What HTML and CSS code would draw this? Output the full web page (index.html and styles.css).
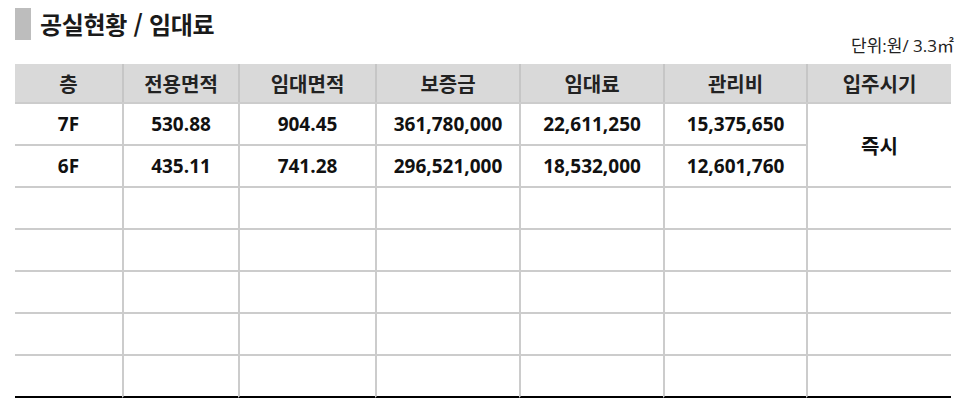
FILE: index.html
```html
<!DOCTYPE html>
<html lang="ko">
<head>
<meta charset="utf-8">
<title>공실현황 / 임대료</title>
<link rel="stylesheet" href="styles.css">
</head>
<body>
<div class="page">
  <div class="title-row">
    <span class="title-mark"></span>
    <h1 class="title">공실현황 / 임대료</h1>
  </div>
  <div class="unit">단위:원/ 3.3㎡</div>
  <table class="vacancy">
    <colgroup>
      <col class="c1"><col class="c2"><col class="c3"><col class="c4"><col class="c5"><col class="c6"><col class="c7">
    </colgroup>
    <thead>
      <tr>
        <th>층</th><th>전용면적</th><th>임대면적</th><th>보증금</th><th>임대료</th><th>관리비</th><th>입주시기</th>
      </tr>
    </thead>
    <tbody>
      <tr>
        <td>7F</td><td>530.88</td><td>904.45</td><td>361,780,000</td><td>22,611,250</td><td>15,375,650</td><td rowspan="2" class="move">즉시</td>
      </tr>
      <tr>
        <td>6F</td><td>435.11</td><td>741.28</td><td>296,521,000</td><td>18,532,000</td><td>12,601,760</td>
      </tr>
      <tr><td></td><td></td><td></td><td></td><td></td><td></td><td></td></tr>
      <tr><td></td><td></td><td></td><td></td><td></td><td></td><td></td></tr>
      <tr><td></td><td></td><td></td><td></td><td></td><td></td><td></td></tr>
      <tr><td></td><td></td><td></td><td></td><td></td><td></td><td></td></tr>
      <tr class="last"><td></td><td></td><td></td><td></td><td></td><td></td><td></td></tr>
    </tbody>
  </table>
</div>
</body>
</html>
```

FILE: styles.css
```css
html, body {
  margin: 0;
  padding: 0;
  background: #ffffff;
}

body {
  font-family: "Open Sans", "Noto Sans CJK KR", sans-serif;
  color: #111111;
}

.page {
  padding: 8px 15px 0 15px;
  width: 936px;
}

.title-row {
  display: flex;
  align-items: center;
  gap: 9px;
  height: 32px;
}

.title-mark {
  display: block;
  width: 16px;
  height: 32px;
  background: #bdbdbd;
}

.title {
  margin: 0;
  font-family: "Noto Sans CJK KR", sans-serif;
  font-size: 24px;
  font-weight: 700;
  line-height: 32px;
  color: #1a1a1a;
  letter-spacing: -0.3px;
}

.unit {
  margin-top: -4px;
  margin-right: -3px;
  text-align: right;
  font-size: 17px;
  line-height: 20px;
  color: #222222;
}

.vacancy {
  margin-top: 8px;
  width: 936px;
  table-layout: fixed;
  border-collapse: separate;
  border-spacing: 0;
}

.c1 { width: 107px; }
.c2 { width: 116px; }
.c3 { width: 137px; }
.c4 { width: 144px; }
.c5 { width: 144px; }
.c6 { width: 143px; }
.c7 { width: 145px; }

.vacancy th,
.vacancy td {
  padding: 0;
  text-align: center;
  vertical-align: middle;
  font-size: 19px;
  font-weight: 700;
  box-sizing: border-box;
}

.vacancy th {
  height: 38px;
  font-size: 20px;
  background: #d9d9d9;
  color: #222222;
}

.vacancy th + th {
  border-left: 2px solid #c6c6c6;
}

.vacancy td {
  height: 42px;
  border-top: 2px solid #cccccc;
  color: #111111;
}

.vacancy td + td {
  border-left: 2px solid #cccccc;
}

.vacancy td.move {
  border-left: 2px solid #cccccc;
  font-size: 20px;
}

.vacancy tr.last td {
  height: 44px;
  border-bottom: 2px solid #000000;
}
```
